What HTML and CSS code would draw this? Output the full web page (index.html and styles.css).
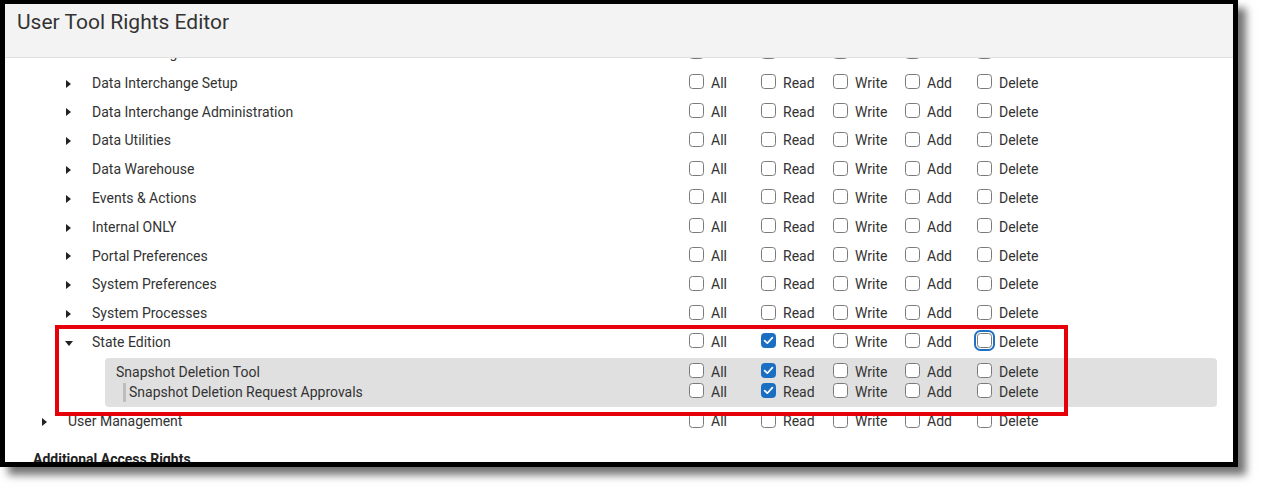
FILE: index.html
```html
<!DOCTYPE html>
<html>
<head>
<meta charset="utf-8">
<link rel="stylesheet" href="styles.css">
</head>
<body>
<div class="frame">
  <div class="header"><h1 class="title">User Tool Rights Editor</h1></div>
  <div class="content">
    <div class="list">
      <div class="row lvl2 first"><div class="name"><span class="tri"></span><span class="label">Data Exchange</span></div><div class="perms"><label class="perm"><span class="cb"></span>All</label><label class="perm"><span class="cb"></span>Read</label><label class="perm"><span class="cb"></span>Write</label><label class="perm"><span class="cb"></span>Add</label><label class="perm"><span class="cb"></span>Delete</label></div></div>
      <div class="row lvl2"><div class="name"><span class="tri"></span><span class="label">Data Interchange Setup</span></div><div class="perms"><label class="perm"><span class="cb"></span>All</label><label class="perm"><span class="cb"></span>Read</label><label class="perm"><span class="cb"></span>Write</label><label class="perm"><span class="cb"></span>Add</label><label class="perm"><span class="cb"></span>Delete</label></div></div>
      <div class="row lvl2"><div class="name"><span class="tri"></span><span class="label">Data Interchange Administration</span></div><div class="perms"><label class="perm"><span class="cb"></span>All</label><label class="perm"><span class="cb"></span>Read</label><label class="perm"><span class="cb"></span>Write</label><label class="perm"><span class="cb"></span>Add</label><label class="perm"><span class="cb"></span>Delete</label></div></div>
      <div class="row lvl2"><div class="name"><span class="tri"></span><span class="label">Data Utilities</span></div><div class="perms"><label class="perm"><span class="cb"></span>All</label><label class="perm"><span class="cb"></span>Read</label><label class="perm"><span class="cb"></span>Write</label><label class="perm"><span class="cb"></span>Add</label><label class="perm"><span class="cb"></span>Delete</label></div></div>
      <div class="row lvl2"><div class="name"><span class="tri"></span><span class="label">Data Warehouse</span></div><div class="perms"><label class="perm"><span class="cb"></span>All</label><label class="perm"><span class="cb"></span>Read</label><label class="perm"><span class="cb"></span>Write</label><label class="perm"><span class="cb"></span>Add</label><label class="perm"><span class="cb"></span>Delete</label></div></div>
      <div class="row lvl2"><div class="name"><span class="tri"></span><span class="label">Events &amp; Actions</span></div><div class="perms"><label class="perm"><span class="cb"></span>All</label><label class="perm"><span class="cb"></span>Read</label><label class="perm"><span class="cb"></span>Write</label><label class="perm"><span class="cb"></span>Add</label><label class="perm"><span class="cb"></span>Delete</label></div></div>
      <div class="row lvl2"><div class="name"><span class="tri"></span><span class="label">Internal ONLY</span></div><div class="perms"><label class="perm"><span class="cb"></span>All</label><label class="perm"><span class="cb"></span>Read</label><label class="perm"><span class="cb"></span>Write</label><label class="perm"><span class="cb"></span>Add</label><label class="perm"><span class="cb"></span>Delete</label></div></div>
      <div class="row lvl2"><div class="name"><span class="tri"></span><span class="label">Portal Preferences</span></div><div class="perms"><label class="perm"><span class="cb"></span>All</label><label class="perm"><span class="cb"></span>Read</label><label class="perm"><span class="cb"></span>Write</label><label class="perm"><span class="cb"></span>Add</label><label class="perm"><span class="cb"></span>Delete</label></div></div>
      <div class="row lvl2"><div class="name"><span class="tri"></span><span class="label">System Preferences</span></div><div class="perms"><label class="perm"><span class="cb"></span>All</label><label class="perm"><span class="cb"></span>Read</label><label class="perm"><span class="cb"></span>Write</label><label class="perm"><span class="cb"></span>Add</label><label class="perm"><span class="cb"></span>Delete</label></div></div>
      <div class="row lvl2"><div class="name"><span class="tri"></span><span class="label">System Processes</span></div><div class="perms"><label class="perm"><span class="cb"></span>All</label><label class="perm"><span class="cb"></span>Read</label><label class="perm"><span class="cb"></span>Write</label><label class="perm"><span class="cb"></span>Add</label><label class="perm"><span class="cb"></span>Delete</label></div></div>
      <div class="row lvl2"><div class="name"><span class="tri open"></span><span class="label">State Edition</span></div><div class="perms"><label class="perm"><span class="cb"></span>All</label><label class="perm"><span class="cb checked"><svg viewBox="0 0 15 15" width="15" height="15"><path d="M3.6 7.6 L6.3 10.2 L11.4 4.6" fill="none" stroke="#fff" stroke-width="1.7" stroke-linecap="round" stroke-linejoin="round"/></svg></span>Read</label><label class="perm"><span class="cb"></span>Write</label><label class="perm"><span class="cb"></span>Add</label><label class="perm"><span class="cb focus"></span>Delete</label></div></div>
      <div class="children">
        <div class="crow"><div class="cname"><span class="label">Snapshot Deletion Tool</span></div><div class="perms"><label class="perm"><span class="cb"></span>All</label><label class="perm"><span class="cb checked"><svg viewBox="0 0 15 15" width="15" height="15"><path d="M3.6 7.6 L6.3 10.2 L11.4 4.6" fill="none" stroke="#fff" stroke-width="1.7" stroke-linecap="round" stroke-linejoin="round"/></svg></span>Read</label><label class="perm"><span class="cb"></span>Write</label><label class="perm"><span class="cb"></span>Add</label><label class="perm"><span class="cb"></span>Delete</label></div></div>
        <div class="crow"><div class="cname nested"><span class="bar"></span><span class="label">Snapshot Deletion Request Approvals</span></div><div class="perms"><label class="perm"><span class="cb"></span>All</label><label class="perm"><span class="cb checked"><svg viewBox="0 0 15 15" width="15" height="15"><path d="M3.6 7.6 L6.3 10.2 L11.4 4.6" fill="none" stroke="#fff" stroke-width="1.7" stroke-linecap="round" stroke-linejoin="round"/></svg></span>Read</label><label class="perm"><span class="cb"></span>Write</label><label class="perm"><span class="cb"></span>Add</label><label class="perm"><span class="cb"></span>Delete</label></div></div>
      </div>
      <div class="row lvl1"><div class="name"><span class="tri"></span><span class="label">User Management</span></div><div class="perms"><label class="perm"><span class="cb"></span>All</label><label class="perm"><span class="cb"></span>Read</label><label class="perm"><span class="cb"></span>Write</label><label class="perm"><span class="cb"></span>Add</label><label class="perm"><span class="cb"></span>Delete</label></div></div>
      <h2 class="section">Additional Access Rights</h2>
    </div>
  </div>
  <div class="highlight"></div>
</div>
</body>
</html>
```

FILE: styles.css
```css
html, body {
  margin: 0;
  padding: 0;
  background: #fff;
}
body {
  font-family: Roboto, "Liberation Sans", Arial, sans-serif;
  color: #333;
  width: 1263px;
  height: 492px;
  overflow: hidden;
}
.frame {
  position: relative;
  box-sizing: border-box;
  width: 1238px;
  height: 467px;
  border: 5px solid #000;
  border-top-width: 4px;
  background: #fff;
  box-shadow: 8px 8px 8px rgba(0, 0, 0, 0.55);
  overflow: hidden;
  display: flex;
  flex-direction: column;
}
.header {
  flex: 0 0 auto;
  height: 53px;
  background: #f3f3f3;
  border-bottom: 1px solid #e0e0e0;
  box-sizing: content-box;
}
.title {
  margin: 0;
  padding: 6px 0 0 12px;
  font-size: 21px;
  line-height: 24px;
  font-weight: 400;
  color: #333;
}
.content {
  flex: 1 1 auto;
  overflow: hidden;
}
.list {
  margin-top: -19px;
}
.row {
  display: flex;
  align-items: center;
  height: 28.8px;
  font-size: 14px;
  line-height: 28.8px;
}
.row.first {
  margin-bottom: 1px;
}
.name {
  display: flex;
  align-items: center;
  width: 684px;
  flex: 0 0 684px;
  box-sizing: border-box;
}
.lvl2 .name { padding-left: 61px; }
.lvl1 .name { padding-left: 37px; }
.tri {
  width: 0;
  height: 0;
  border-top: 4px solid transparent;
  border-bottom: 4px solid transparent;
  border-left: 5px solid #222;
  margin-right: 21px;
  margin-top: 1px;
}
.tri.open {
  border-left: 4px solid transparent;
  border-right: 4px solid transparent;
  border-top: 5px solid #222;
  border-bottom: 0;
  margin-left: -1px;
  margin-right: 19px;
  margin-top: 2px;
}
.perms {
  display: flex;
}
.perm {
  display: flex;
  align-items: center;
  width: 72px;
  flex: 0 0 72px;
  font-size: 14px;
  color: #333;
}
.cb {
  box-sizing: border-box;
  width: 15px;
  height: 15px;
  border: 1px solid #7a7a7a;
  border-radius: 3.5px;
  background: #fff;
  margin-right: 7px;
  margin-bottom: 3px;
  flex: 0 0 15px;
  display: flex;
}
.cb svg {
  display: block;
  margin: -1px;
}
.cb.checked {
  background: #1b6fc3;
  border-color: #1b6fc3;
}
.cb.focus {
  outline: 2px solid #1f70c1;
  outline-offset: 1px;
}
.children {
  margin: 1.5px 16px 0 100px;
  height: 49px;
  box-sizing: border-box;
  padding-top: 3px;
  background: #e0e0e0;
  border-radius: 4px;
}
.crow {
  display: flex;
  align-items: center;
  height: 20.8px;
  font-size: 14px;
  line-height: 20px;
}
.cname {
  display: flex;
  align-items: center;
  width: 584px;
  flex: 0 0 584px;
  box-sizing: border-box;
  padding-left: 11px;
}
.cname.nested {
  padding-left: 18px;
}
.bar {
  width: 3px;
  height: 19px;
  background: #bdbdbd;
  margin-right: 3px;
}
.section {
  margin: 13px 0 0 28px;
  font-size: 14px;
  line-height: 20px;
  font-weight: 700;
  color: #222;
}
.highlight {
  position: absolute;
  left: 50px;
  top: 321px;
  width: 1013px;
  height: 91px;
  box-sizing: border-box;
  border: 4.5px solid #e5000a;
  pointer-events: none;
}
```
